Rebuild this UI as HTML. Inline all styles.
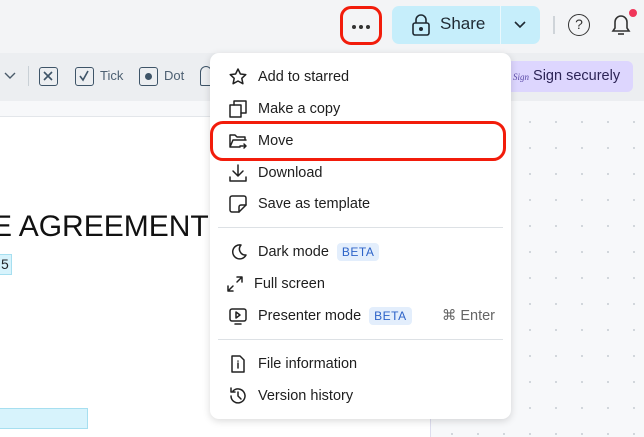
<!DOCTYPE html>
<html><head><style>
*{margin:0;padding:0;box-sizing:border-box}
body{width:644px;height:437px;overflow:hidden;background:#f3f4f6;font-family:"Liberation Sans",sans-serif;position:relative;color:#1f2328}
.abs{position:absolute}
.mi{position:absolute;left:0;width:301px;height:32px;display:flex;align-items:center;font-size:14.5px;color:#1e1e1e}
.mi svg{position:absolute;left:18px;width:20px;height:20px;fill:none;stroke:#222;stroke-width:1.5;stroke-linecap:round;stroke-linejoin:round}
.mi span.t{position:absolute;left:48px}
.beta{background:#e3eefc;color:#2d63c8;font-size:12px;padding:2px 5px;border-radius:4px;letter-spacing:.5px;margin-left:8px}
.dot{position:absolute;top:16px;width:4px;height:4px;border-radius:50%;background:#333}
</style></head><body>
<div class="abs" style="left:0;top:53px;width:644px;height:48px;background:#eceef1"></div>
<div class="abs" style="left:0;top:101px;width:430px;height:16px;background:#f7f8fa;border-bottom:1px solid #e3e6ea"></div>
<div class="abs" style="left:0;top:117px;width:430px;height:320px;background:#fff"></div>
<div class="abs" style="left:430px;top:101px;width:214px;height:336px;background:#f7f8fa;background-image:radial-gradient(#cfd4da 1px,transparent 1.2px);background-size:26px 26px;background-position:8px 8px;border-left:1px solid #dde"></div>
<svg class="abs" style="left:4px;top:72px" width="12" height="8" viewBox="0 0 12 8" fill="none" stroke="#4a5a6a" stroke-width="1.4"><path d="M1 1l5 5 5-5"/></svg>
<div class="abs" style="left:28px;top:66px;width:1px;height:20px;background:#c9d0d6"></div>
<div class="abs" style="left:39px;top:67px;width:19px;height:19px;border:1.6px solid #3e5468;border-radius:3px"><svg width="16" height="16" viewBox="0 0 16 16" stroke="#3e5468" stroke-width="1.6"><path d="M4 4l8 8M12 4l-8 8"/></svg></div>
<div class="abs" style="left:75px;top:67px;width:19px;height:19px;border:1.6px solid #3e5468;border-radius:3px"><svg width="16" height="16" viewBox="0 0 16 16" fill="none" stroke="#3e5468" stroke-width="1.6"><path d="M4 8l3 4 5-9"/></svg></div>
<div class="abs" style="left:100px;top:68px;font-size:13px;color:#4d6072">Tick</div>
<div class="abs" style="left:139px;top:67px;width:19px;height:19px;border:1.6px solid #3e5468;border-radius:3px"><div style="width:7px;height:7px;border-radius:50%;background:#3e5468;margin:4.5px auto"></div></div>
<div class="abs" style="left:164px;top:68px;font-size:13px;color:#4d6072">Dot</div>
<div class="abs" style="left:200px;top:66px;width:12px;height:20px;border:1.6px solid #3e5468;border-radius:6px 6px 2px 2px"></div>
<div class="abs" style="left:505px;top:61px;width:128px;height:31px;background:#ddd6fe;border-radius:6px;font-size:14.5px;color:#2c2456;line-height:31px;padding-left:8px"><i style="font-size:9px;font-family:'Liberation Serif';color:#5b4aa8">Sign</i> Sign securely</div>
<div class="abs" style="left:-8px;top:210px;font-size:30px;color:#111">E AGREEMENT</div>
<div class="abs" style="left:-4px;top:254px;width:16px;height:21px;background:#d7f3fc;border:1px solid #a6dff0;font-size:14px;line-height:19px;padding-left:4px">5</div>
<div class="abs" style="left:-2px;top:408px;width:90px;height:21px;background:#d7f3fc;border:1px solid #a6dff0"></div>
<div class="abs" style="left:340px;top:6px;width:42px;height:39px;border:3px solid #f21c0b;border-radius:11px"><div class="dot" style="left:9px"></div><div class="dot" style="left:16px"></div><div class="dot" style="left:23px"></div></div>
<div class="abs" style="left:392px;top:6px;width:148px;height:38px;background:#c6eefb;border-radius:7px"></div>
<div class="abs" style="left:500px;top:6px;width:1px;height:38px;background:#e9f8fd"></div>
<svg class="abs" style="left:410px;top:13px" width="22" height="24" viewBox="0 0 22 24" fill="none" stroke="#1f2a33" stroke-width="1.6"><rect x="3" y="10" width="16" height="12" rx="2"/><path d="M6 10V7a5 5 0 0 1 10 0v3"/><circle cx="11" cy="16" r="1.2" fill="#1f2a33"/></svg>
<div class="abs" style="left:440px;top:14px;font-size:17px;color:#1f2a33">Share</div>
<svg class="abs" style="left:513px;top:20px" width="14" height="10" viewBox="0 0 14 10" fill="none" stroke="#1f2a33" stroke-width="1.6"><path d="M2 2l5 5 5-5"/></svg>
<div class="abs" style="left:553px;top:16px;width:2px;height:18px;background:#cfd4d9"></div>
<div class="abs" style="left:568px;top:14px;width:22px;height:22px;border:1.6px solid #333;border-radius:50%;font-size:14px;text-align:center;line-height:19px;color:#333">?</div>
<svg class="abs" style="left:609px;top:12px" width="24" height="26" viewBox="0 0 24 26" fill="none" stroke="#333" stroke-width="1.6"><path d="M4 19h16l-2-3v-6a6 6 0 0 0-12 0v6z"/><path d="M9 22h6"/></svg>
<div class="abs" style="left:629px;top:9px;width:8px;height:8px;border-radius:50%;background:#f0365a"></div>
<div class="abs" style="left:210px;top:53px;width:301px;height:366px;background:#fff;border-radius:9px;box-shadow:0 2px 8px rgba(0,0,0,.15)">
<div class="mi" style="top:8px"><svg viewBox="0 0 20 20"><path d="M10 2l2.4 5 5.4.6-4 3.7 1.1 5.4L10 14l-4.9 2.7 1.1-5.4-4-3.7 5.4-.6z"/></svg><span class="t">Add to starred</span></div>
<div class="mi" style="top:40px"><svg viewBox="0 0 20 20"><rect x="2" y="6" width="11" height="12"/><path d="M6 6V2h12v12h-5"/></svg><span class="t">Make a copy</span></div>
<div class="mi" style="top:72px"><svg viewBox="0 0 20 20"><path d="M2 16V4h5l2 2h8v3M2 16h10M2 16l3-7h13"/><path d="M12 15h6M16 13l2 2-2 2"/></svg><span class="t">Move</span></div>
<div class="mi" style="top:104px"><svg viewBox="0 0 20 20"><path d="M10 2v11M5 8l5 5 5-5M2 14v4h16v-4"/></svg><span class="t">Download</span></div>
<div class="mi" style="top:135px"><svg viewBox="0 0 20 20"><path d="M4 2h12a2 2 0 0 1 2 2v7l-7 7H4a2 2 0 0 1-2-2V4a2 2 0 0 1 2-2z"/><path d="M11 18v-5a2 2 0 0 1 2-2h5"/></svg><span class="t">Save as template</span></div>
<div class="abs" style="left:8px;top:174px;width:285px;height:1px;background:#dde1e5"></div>
<div class="mi" style="top:183px"><svg viewBox="0 0 20 20"><path d="M13 3a7 7 0 1 0 5 10A6 6 0 0 1 13 3z"/></svg><span class="t">Dark mode<span class="beta">BETA</span></span></div>
<div class="mi" style="top:215px"><svg viewBox="0 0 20 20" style="left:15px"><path d="M12 3h5v5M17 3l-5 5M8 17H3v-5M3 17l5-5"/></svg><span class="t" style="left:44px">Full screen</span></div>
<div class="mi" style="top:247px"><svg viewBox="0 0 20 20"><rect x="2" y="3" width="16" height="12" rx="2"/><path d="M8 6v6l4-3zM7 18h6"/></svg><span class="t">Presenter mode<span class="beta">BETA</span></span><span style="position:absolute;right:16px;color:#666">⌘ Enter</span></div>
<div class="abs" style="left:8px;top:286px;width:285px;height:1px;background:#dde1e5"></div>
<div class="mi" style="top:295px"><svg viewBox="0 0 20 20"><path d="M4 2h8l4 4v12H4z"/><path d="M10 9v5M10 7v.1"/></svg><span class="t">File information</span></div>
<div class="mi" style="top:327px"><svg viewBox="0 0 20 20"><path d="M3 10a7 7 0 1 0 2-5M3 2v4h4M10 6v4l3 3"/></svg><span class="t">Version history</span></div>
</div>
<div class="abs" style="left:210px;top:121px;width:296px;height:40px;border:3px solid #f21c0b;border-radius:13px"></div>
</body></html>
